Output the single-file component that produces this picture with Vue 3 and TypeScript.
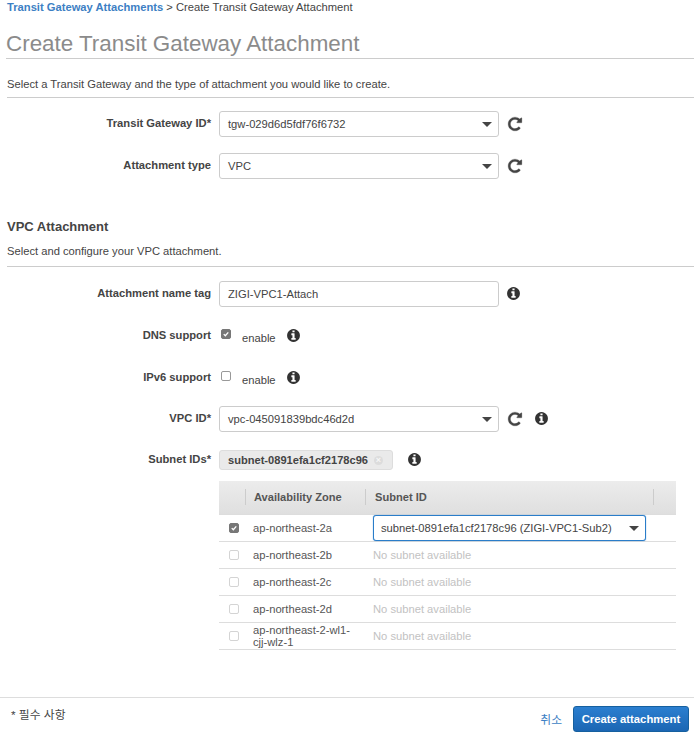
<script setup lang="ts">
const refreshPath =
  'M1664 256v448q0 26-19 45t-45 19h-448q-42 0-59-40-17-39 14-69l138-138q-148-137-349-137-104 0-198.500 40.500t-163.500 109.500-109.500 163.500-40.500 198.500 40.500 198.500 109.500 163.500 163.500 109.500 198.500 40.500q119 0 225-52t179-147q7-10 23-12 15 0 25 9l137 138q9 8 9.500 20.500t-7.500 22.500q-109 132-264 204.500t-327 72.500q-156 0-298-61t-245-164-164-245-61-298 61-298 164-245 245-164 298-61q147 0 284.500 55.500t244.500 156.500l130-129q29-31 70-14 39 17 39 59z'
const infoPath =
  'M1152 1376v-160q0-14-9-23t-23-9h-96v-512q0-14-9-23t-23-9h-320q-14 0-23 9t-9 23v160q0 14 9 23t23 9h96v320h-96q-14 0-23 9t-9 23v160q0 14 9 23t23 9h448q14 0 23-9t9-23zm-128-896v-160q0-14-9-23t-23-9h-192q-14 0-23 9t-9 23v160q0 14 9 23t23 9h192q14 0 23-9t9-23zm640 416q0 209-103 385.500t-279.500 279.500-385.500 103-385.500-103-279.500-279.500-103-385.500 103-385.500 279.500-279.500 385.500-103 385.500 103 279.500 279.500 103 385.500z'

const zones = [
  { name: 'ap-northeast-2b' },
  { name: 'ap-northeast-2c' },
  { name: 'ap-northeast-2d' },
  { name: 'ap-northeast-2-wl1-cjj-wlz-1' },
]
</script>

<template>
  <div class="page">
    <div class="crumbs"><a>Transit Gateway Attachments</a> &gt; Create Transit Gateway Attachment</div>
    <h1>Create Transit Gateway Attachment</h1>
    <p class="desc">Select a Transit Gateway and the type of attachment you would like to create.</p>

    <div class="form first">
      <div class="row">
        <label>Transit Gateway ID*</label>
        <div class="select">tgw-029d6d5fdf76f6732<i class="caret"></i></div>
        <svg class="refresh" viewBox="0 0 1792 1792"><path :d="refreshPath" /></svg>
      </div>
      <div class="row">
        <label>Attachment type</label>
        <div class="select">VPC<i class="caret"></i></div>
        <svg class="refresh" viewBox="0 0 1792 1792"><path :d="refreshPath" /></svg>
      </div>
    </div>

    <h2>VPC Attachment</h2>
    <p class="desc">Select and configure your VPC attachment.</p>

    <div class="form second">
      <div class="row">
        <label>Attachment name tag</label>
        <div class="select">ZIGI-VPC1-Attach</div>
        <svg class="info" viewBox="0 0 1792 1792"><path :d="infoPath" /></svg>
      </div>
      <div class="row">
        <label>DNS support</label>
        <span class="check on"><svg viewBox="0 0 12 12"><path d="M2.6 6.2 5 8.600 9.400 3.600" /></svg></span>
        <span class="enable">enable</span>
        <svg class="info" viewBox="0 0 1792 1792"><path :d="infoPath" /></svg>
      </div>
      <div class="row tight">
        <label>IPv6 support</label>
        <span class="check"></span>
        <span class="enable">enable</span>
        <svg class="info" viewBox="0 0 1792 1792"><path :d="infoPath" /></svg>
      </div>
      <div class="row vpc">
        <label>VPC ID*</label>
        <div class="select">vpc-045091839bdc46d2d<i class="caret"></i></div>
        <svg class="refresh" viewBox="0 0 1792 1792"><path :d="refreshPath" /></svg>
        <svg class="info near" viewBox="0 0 1792 1792"><path :d="infoPath" /></svg>
      </div>
      <div class="row subnets">
        <label>Subnet IDs*</label>
        <span class="pill">subnet-0891efa1cf2178c96<i class="pill-x">×</i></span>
        <svg class="info" viewBox="0 0 1792 1792"><path :d="infoPath" /></svg>
      </div>
    </div>

    <div class="table">
      <div class="thead">
        <div class="c1"></div>
        <div class="c2"><span>Availability Zone</span></div>
        <div class="c3"><span>Subnet ID</span></div>
      </div>
      <div class="tr">
        <div class="c1"><span class="check on"><svg viewBox="0 0 12 12"><path d="M2.6 6.2 5 8.600 9.400 3.600" /></svg></span></div>
        <div class="c2">ap-northeast-2a</div>
        <div class="c3">
          <div class="select focus">subnet-0891efa1cf2178c96 (ZIGI-VPC1-Sub2)<i class="caret"></i></div>
        </div>
      </div>
      <div v-for="z in zones" :key="z.name" class="tr">
        <div class="c1"><span class="check off"></span></div>
        <div class="c2">{{ z.name }}</div>
        <div class="c3 none">No subnet available</div>
      </div>
    </div>

    <div class="footer">
      <span class="req">* 필수 사항</span>
      <a class="cancel">취소</a>
      <button class="create">Create attachment</button>
    </div>
  </div>
</template>

<style scoped>
.page {
  position: relative;
  width: 694px;
  height: 739px;
  overflow: hidden;
  background: #fff;
  color: #444;
  font-family: "Liberation Sans", Arial, "Noto Sans CJK KR", sans-serif;
  font-size: 11.2px;
}

.crumbs {
  height: 15px;
  padding-left: 7px;
  line-height: 15px;
  font-size: 11.200px;
  color: #444;
}

.crumbs a {
  color: #3d7fc4;
  font-weight: bold;
}

h1 {
  margin: 15px 0 0 6px;
  height: 28px;
  border-bottom: 1px solid #ccc;
  line-height: 27px;
  font-size: 22.400px;
  font-weight: normal;
  color: #8b8b8b;
}

.desc {
  margin: 17px 0 0 7px;
  height: 21px;
  border-bottom: 1px solid #ccc;
  line-height: 16px;
  font-size: 11.200px;
  color: #444;
}

.form {
  display: flex;
  flex-direction: column;
}

.form.first {
  margin-top: 13px;
}

.form.second {
  margin-top: 14px;
}

.row {
  display: flex;
  align-items: center;
  height: 26px;
  margin-bottom: 16px;
}

.row.tight {
  margin-bottom: 15px;
}

.row.vpc {
  margin-bottom: 18px;
}

.row.subnets {
  height: 20px;
  margin-bottom: 11px;
}

label {
  width: 211px;
  margin: -2px 8px 0 0;
  text-align: right;
  font-weight: bold;
  font-size: 11.200px;
  color: #444;
}

.select {
  position: relative;
  box-sizing: border-box;
  width: 280px;
  height: 26px;
  padding-left: 8px;
  border: 1px solid #ccc;
  border-radius: 3px;
  background: #fff;
  line-height: 24px;
  font-size: 11.200px;
  color: #444;
}

.caret {
  position: absolute;
  top: 10px;
  right: 6px;
  width: 0;
  height: 0;
  border-left: 5px solid transparent;
  border-right: 5px solid transparent;
  border-top: 5px solid #444;
}

.refresh {
  width: 16px;
  height: 16px;
  margin: -1px 0 0 8px;
  fill: #444;
  stroke: #444;
  stroke-width: 30;
}

.info {
  width: 15px;
  height: 15px;
  margin: -2px 0 0 7px;
  fill: #333;
}

.info.near {
  margin-left: 11px;
}

.check {
  display: inline-block;
  box-sizing: border-box;
  width: 10px;
  height: 10px;
  border: 1px solid #999;
  border-radius: 2px;
  background: #fff;
}

.check.on {
  border-color: #777;
  background: #777;
}

.check.on svg {
  display: block;
  width: 8px;
  height: 8px;
  fill: none;
  stroke: #fff;
  stroke-width: 2;
}

.check.off {
  border-color: #d4d4d4;
}

.row > .check {
  margin: -4px 0 0 2px;
}

.enable {
  margin: 3px 10px 0 11px;
  font-size: 11.200px;
}

.row > .enable + .info {
  margin-left: 0;
}

.pill {
  display: inline-flex;
  align-items: center;
  box-sizing: border-box;
  width: 174px;
  height: 20px;
  padding-left: 8px;
  border: 1px solid #ddd;
  border-radius: 3px;
  background: #eaeaea;
  font-weight: bold;
  font-size: 11.100px;
  color: #444;
}

.pill-x {
  width: 9px;
  height: 9px;
  margin-left: 6px;
  border-radius: 50%;
  background: #dcdcdc;
  color: #f6f6f6;
  font-style: normal;
  font-size: 9px;
  line-height: 9px;
  text-align: center;
}

.row.subnets .info {
  margin-left: 14px;
}

.table {
  width: 457px;
  margin-left: 219px;
}

.thead {
  display: flex;
  align-items: center;
  height: 33px;
  background: linear-gradient(#ececec, #dfdfdf);
  border-bottom: 1px solid #ddd;
  font-weight: bold;
  font-size: 11.100px;
  color: #555;
}

.thead .c2,
.thead .c3 {
  height: 16px;
  margin-bottom: 1px;
  line-height: 16px;
  border-left: 1px solid #ccc;
}

.c1 {
  display: flex;
  align-items: center;
  box-sizing: border-box;
  width: 26px;
  padding-left: 10px;
}

.c2 {
  box-sizing: border-box;
  width: 120px;
  padding-left: 8px;
}

.c3 {
  box-sizing: border-box;
  flex: 1;
  padding-left: 7px;
}

.thead .c3 {
  flex: none;
  width: 289px;
  padding-left: 9px;
  border-right: 1px solid #ccc;
}

.tr {
  display: flex;
  align-items: center;
  height: 26px;
  border-bottom: 1px solid #ddd;
  font-size: 11.200px;
  line-height: 12px;
  color: #444;
}

.tr .c2 {
  width: 121px;
  padding-right: 14px;
  color: #555;
}

.tr .c3 {
  padding-left: 8px;
}

.tr .none {
  padding-left: 7px;
  color: #c2c2c2;
  font-size: 11.200px;
}

.select.focus {
  width: 273px;
  margin-left: -1px;
  border-color: #2a7dc9;
  box-shadow: 0 0 1px #2a7dc9;
  padding-left: 7px;
}

.footer {
  position: absolute;
  left: 0;
  right: 0;
  top: 697px;
  display: flex;
  align-items: center;
  height: 41px;
  border-top: 1px solid #ddd;
  font-size: 11.800px;
}

.req {
  margin: -11px auto 0 11px;
  color: #444;
}

.cancel {
  margin-right: 11px;
  color: #3d7fc4;
}

.create {
  box-sizing: border-box;
  width: 116px;
  height: 26px;
  margin: 1px 5px 0 0;
  padding: 0;
  border: 1px solid #16609f;
  border-radius: 3px;
  background: linear-gradient(#2b7fd0, #1b66b3);
  color: #fff;
  font-family: inherit;
  font-weight: bold;
  font-size: 11.300px;
}

h2 {
  margin: 23px 0 0 7px;
  height: 17px;
  line-height: 17px;
  font-size: 13px;
  font-weight: bold;
  color: #444;
}

h2 + .desc {
  margin-top: 8px;
  height: 23px;
}
</style>

<style>
body {
  background: #fff;
}
</style>
